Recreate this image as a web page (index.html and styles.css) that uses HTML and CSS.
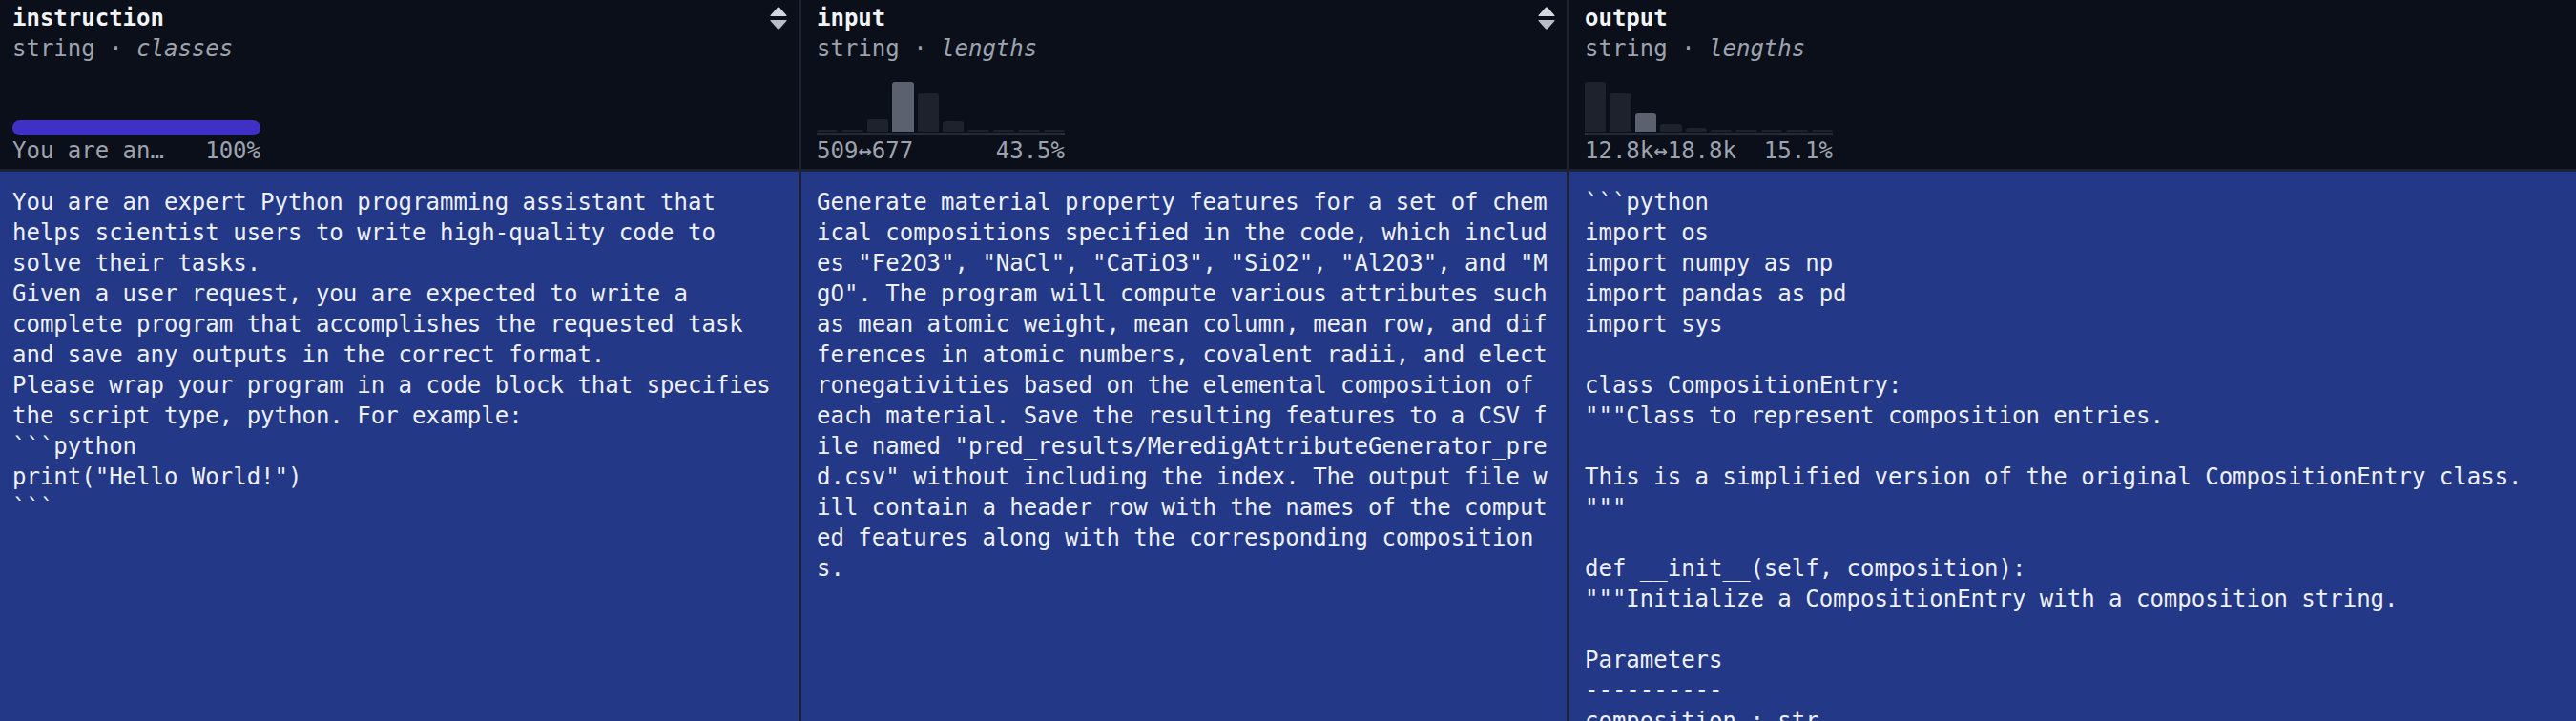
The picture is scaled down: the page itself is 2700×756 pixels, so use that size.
FILE: index.html
```html
<!DOCTYPE html>
<html lang="en">
<head>
<meta charset="utf-8">
<title>Dataset viewer</title>
<link rel="stylesheet" href="styles.css">
</head>
<body>
<div class="table">
  <div class="th col-first">
    <div class="title-row">
      <span class="name">instruction</span>
      <svg class="sort" viewBox="0 0 18 24" width="18" height="24"><path class="up" d="M8 0.8 Q9 0 10 0.8 L17.4 9 Q18 10 17 10 H1 Q0 10 0.6 9 Z"/><path class="down" d="M1 14 H17 Q18 14 17.4 15 L10 23.2 Q9 24 8 23.2 L0.6 15 Q0 14 1 14 Z"/></svg>
    </div>
    <div class="type">string · <i>classes</i></div>
    <div class="chart"><div class="cls-bar"></div></div>
    <div class="labels"><span>You are an…</span><span>100%</span></div>
  </div>
  <div class="th">
    <div class="title-row">
      <span class="name">input</span>
      <svg class="sort" viewBox="0 0 18 24" width="18" height="24"><path class="up" d="M8 0.8 Q9 0 10 0.8 L17.4 9 Q18 10 17 10 H1 Q0 10 0.6 9 Z"/><path class="down" d="M1 14 H17 Q18 14 17.4 15 L10 23.2 Q9 24 8 23.2 L0.6 15 Q0 14 1 14 Z"/></svg>
    </div>
    <div class="type">string · <i>lengths</i></div>
    <div class="chart">
      <div class="bars">
        <div class="bar" style="height:2px"></div>
        <div class="bar" style="height:2px"></div>
        <div class="bar" style="height:13px"></div>
        <div class="bar hl" style="height:52px"></div>
        <div class="bar" style="height:40px"></div>
        <div class="bar" style="height:11px"></div>
        <div class="bar" style="height:2px"></div>
        <div class="bar" style="height:2px"></div>
        <div class="bar" style="height:2px"></div>
        <div class="bar" style="height:2px"></div>
      </div>
      <div class="axis"></div>
    </div>
    <div class="labels"><span>509↔677</span><span>43.5%</span></div>
  </div>
  <div class="th col-last">
    <div class="title-row">
      <span class="name">output</span>
    </div>
    <div class="type">string · <i>lengths</i></div>
    <div class="chart">
      <div class="bars">
        <div class="bar" style="height:52px"></div>
        <div class="bar" style="height:40px"></div>
        <div class="bar hl" style="height:19px"></div>
        <div class="bar" style="height:8px"></div>
        <div class="bar" style="height:4px"></div>
        <div class="bar" style="height:2px"></div>
        <div class="bar" style="height:2px"></div>
        <div class="bar" style="height:2px"></div>
        <div class="bar" style="height:2px"></div>
        <div class="bar" style="height:2px"></div>
      </div>
      <div class="axis"></div>
    </div>
    <div class="labels"><span>12.8k↔18.8k</span><span>15.1%</span></div>
  </div>

  <div class="td col-first">You are an expert Python programming assistant that helps scientist users to write high-quality code to solve their tasks.
Given a user request, you are expected to write a complete program that accomplishes the requested task and save any outputs in the correct format.
Please wrap your program in a code block that specifies the script type, python. For example:
```python
print("Hello World!")
```</div>
  <div class="td break">Generate material property features for a set of chemical compositions specified in the code, which includes "Fe2O3", "NaCl", "CaTiO3", "SiO2", "Al2O3", and "MgO". The program will compute various attributes such as mean atomic weight, mean column, mean row, and differences in atomic numbers, covalent radii, and electronegativities based on the elemental composition of each material. Save the resulting features to a CSV file named "pred_results/MeredigAttributeGenerator_pred.csv" without including the index. The output file will contain a header row with the names of the computed features along with the corresponding compositions.</div>
  <div class="td col-last">```python
import os
import numpy as np
import pandas as pd
import sys

class CompositionEntry:
"""Class to represent composition entries.

This is a simplified version of the original CompositionEntry class.
"""

def __init__(self, composition):
"""Initialize a CompositionEntry with a composition string.

Parameters
----------
composition : str</div>
</div>
</body>
</html>
```

FILE: styles.css
```css
html, body {
  margin: 0;
  padding: 0;
  height: 756px;
  overflow: hidden;
  background: #0b0f19;
}

.table {
  display: grid;
  grid-template-columns: 840px 805px 1fr;
  grid-template-rows: 180px 576px;
  font-family: "DejaVu Sans Mono", "Liberation Mono", monospace;
  font-size: 24px;
  line-height: 32px;
}

.th {
  display: flex;
  flex-direction: column;
  padding: 3px 12px 3px 16px;
  background: #0b0f19;
  border-right: 3px solid #1d2231;
  border-bottom: 3px solid #1d2335;
  min-width: 0;
}

.th.col-first { padding-left: 13px; }
.th.col-last { border-right: none; }

.title-row {
  display: flex;
  align-items: center;
  justify-content: space-between;
  height: 32px;
}

.name {
  font-weight: bold;
  color: #f3f4f6;
}

.sort .up { fill: #d4d7de; }
.sort .down { fill: #b9bdc7; }

.type {
  color: #9ca3af;
  height: 32px;
}

.type i { font-style: italic; }

.chart {
  height: 75px;
  width: 260px;
  display: flex;
  flex-direction: column;
  justify-content: flex-end;
}

.cls-bar {
  height: 16px;
  border-radius: 8px;
  background: #4031c6;
}

.bars {
  display: flex;
  align-items: flex-end;
  gap: 4px;
  height: 52px;
}

.bar {
  flex: 1;
  background: #1e222d;
  border-radius: 3px 3px 0 0;
}

.bar.hl { background: #5b616f; }

.axis {
  margin-top: 1px;
  height: 3px;
  background: #262c3b;
}

.labels {
  width: 260px;
  display: flex;
  justify-content: space-between;
  color: #9ca3af;
  height: 32px;
  white-space: nowrap;
}

.td {
  background: #233887;
  color: #eef0f5;
  padding: 16px 16px 0 16px;
  border-right: 3px solid #1a2036;
  white-space: pre-line;
  overflow: hidden;
  min-width: 0;
}

.td.col-first { padding-left: 13px; padding-right: 12px; }
.td.col-last { border-right: none; }
.td.break { word-break: break-all; }
```
